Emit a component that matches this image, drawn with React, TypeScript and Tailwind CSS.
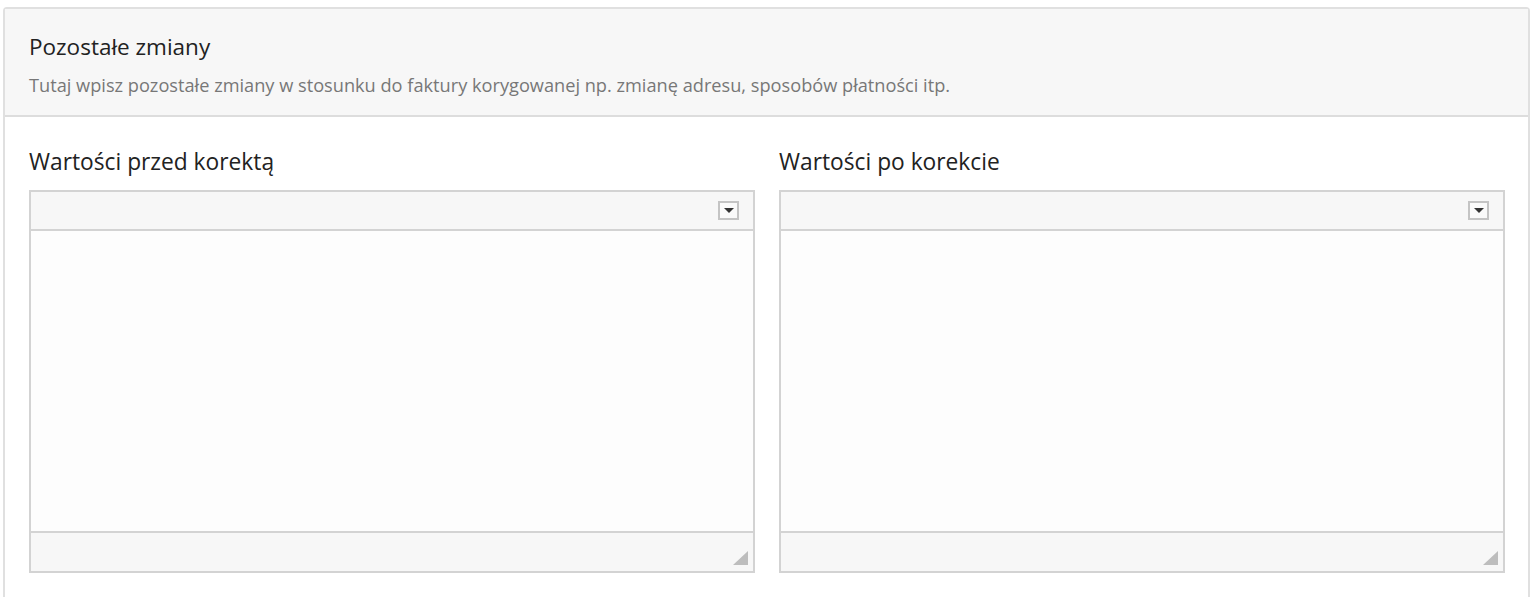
export default function App() {
    const editors = ["Wartości przed korektą", "Wartości po korekcie"];

    return (
        <main className="min-h-screen bg-white pl-[3px] pr-[9px] pt-[7px] font-['Open_Sans',sans-serif]">
            <section className="border-2 border-[#e0e0e0] rounded-t-[4px] bg-white">
                {/* NAGŁÓWEK */}
                <header className="bg-[#f7f7f7] border-b-2 border-[#dddddd] px-[24px] pt-[23px] pb-[17px]">
                    <h1 className="text-[22.5px] leading-[30px] text-[#222]">Pozostałe zmiany</h1>
                    <p className="mt-[10px] text-[18.2px] leading-[26px] text-[#777] whitespace-nowrap">
                        Tutaj wpisz pozostałe zmiany w stosunku do faktury korygowanej np. zmianę adresu, sposobów płatności itp.
                    </p>
                </header>

                {/* EDYTORY */}
                <div className="grid grid-cols-2 gap-[24px] pl-[24px] pr-[23px] pt-[29px] pb-[24px]">
                    {editors.map((label) => (
                        <div key={label}>
                            <h2 className="text-[22.75px] leading-[32px] text-[#222] mb-[12px]">{label}</h2>
                            <div className="border-2 border-[#d3d3d3]">
                                <div className="h-[39px] bg-[#f7f7f7] border-b-2 border-[#d3d3d3] flex items-center justify-end pr-[14px]">
                                    <div className="w-[21px] h-[19px] border-2 border-[#c4c4c4] bg-[#fafafa] flex items-center justify-center">
                                        <div className="w-0 h-0 border-l-[5px] border-r-[5px] border-t-[5px] border-l-transparent border-r-transparent border-t-[#333]" />
                                    </div>
                                </div>
                                <div className="h-[302px] bg-[#fdfdfd] border-b-2 border-[#d3d3d3]" />
                                <div className="h-[38px] bg-[#f7f7f7] flex items-end justify-end pr-[5px] pb-[6px]">
                                    <svg width="15" height="14" viewBox="0 0 15 14">
                                        <polygon points="15,0 15,14 0,14" fill="#bdbdbd" />
                                    </svg>
                                </div>
                            </div>
                        </div>
                    ))}
                </div>
            </section>
        </main>
    );
}
